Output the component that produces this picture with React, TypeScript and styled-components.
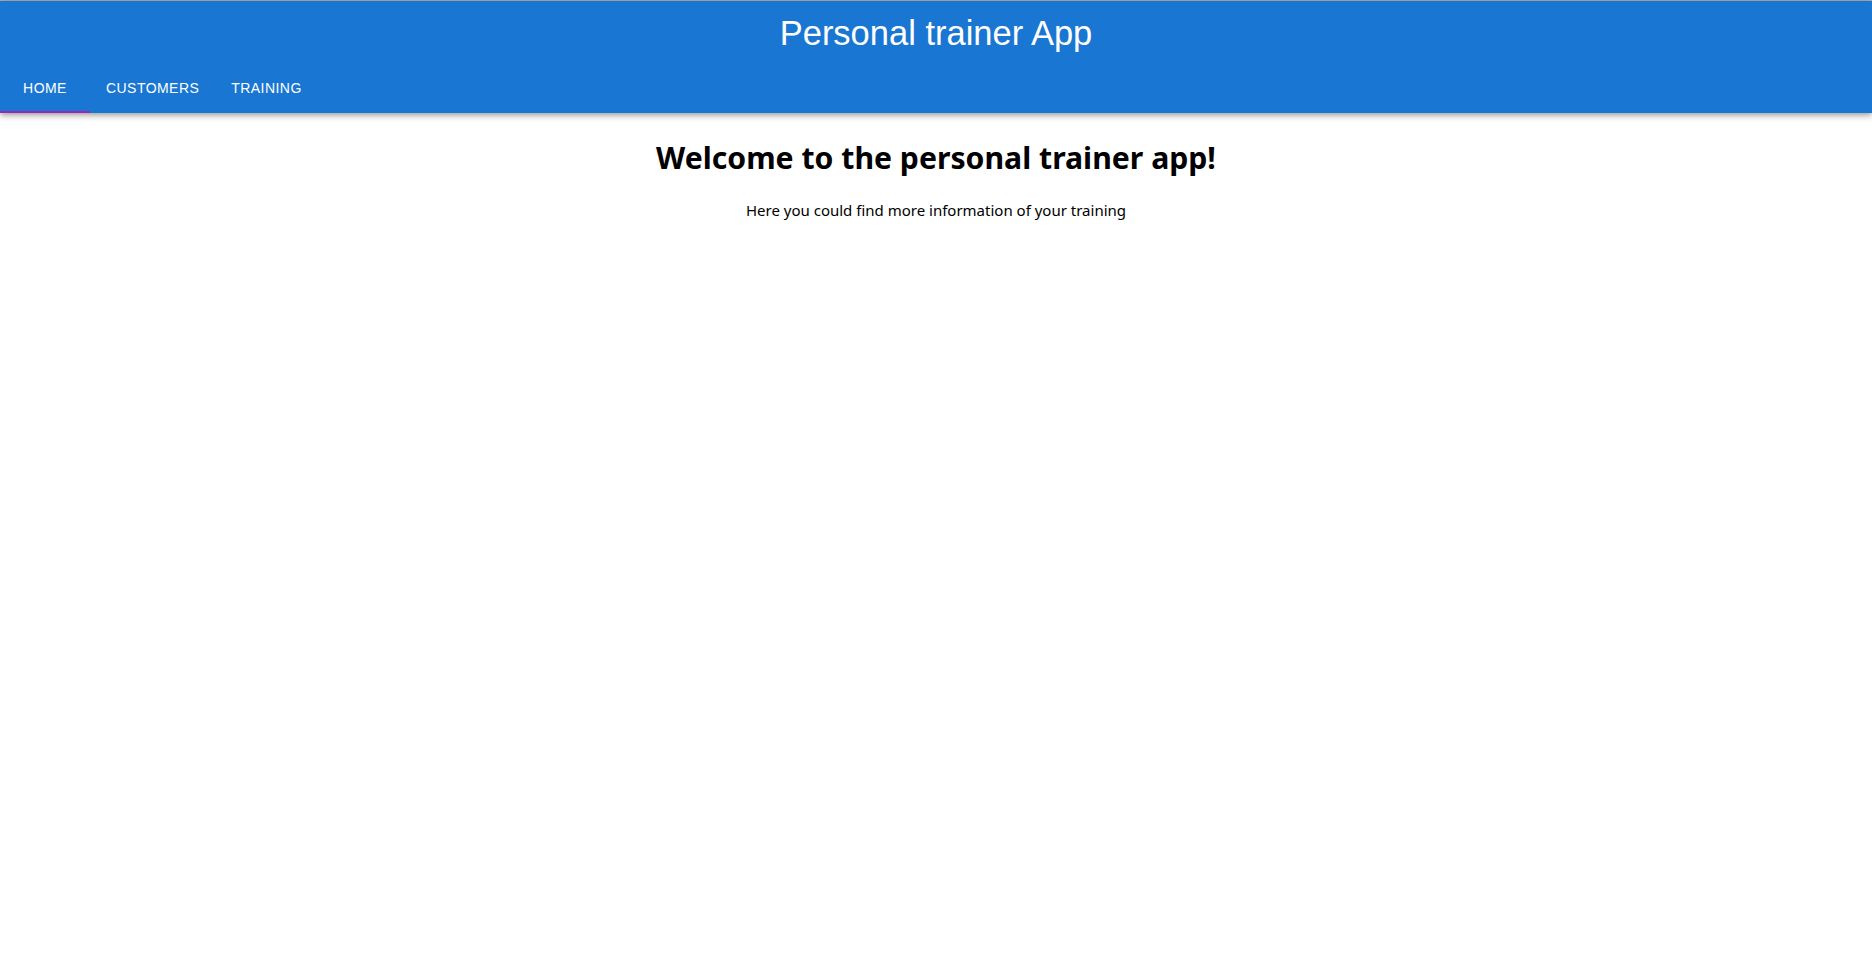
import { useState } from "react";
import styled, { createGlobalStyle } from "styled-components";

const GlobalStyle = createGlobalStyle`
  html, body {
    margin: 0;
    padding: 0;
    background: #ffffff;
  }
  body {
    font-family: "Noto Sans", "Open Sans", sans-serif;
  }
`;

const tabs = ["Home", "Customers", "Training"];

function App() {
  const [active, setActive] = useState<number>(0);

  return (
    <Page>
      <GlobalStyle />
      <AppBar>
        <Toolbar>
          <Title>Personal trainer App</Title>
        </Toolbar>
        <Tabs>
          {tabs.map((t, i) => (
            <Tab key={t} $active={active === i} onClick={() => setActive(i)}>
              {t}
            </Tab>
          ))}
        </Tabs>
      </AppBar>
      <Content>
        <h1>Welcome to the personal trainer app!</h1>
        <p>Here you could find more information of your training</p>
      </Content>
    </Page>
  );
}

const Page = styled.div`
  min-height: 100vh;
  border-top: 1px solid #a9a9a9;
  box-sizing: border-box;
`;

const AppBar = styled.header`
  background: #1976d2;
  color: #ffffff;
  display: flex;
  flex-direction: column;
  box-shadow: 0px 2px 4px -1px rgba(0, 0, 0, 0.2),
    0px 4px 5px 0px rgba(0, 0, 0, 0.14), 0px 1px 10px 0px rgba(0, 0, 0, 0.12);
  position: relative;
  z-index: 1;
`;

const Toolbar = styled.div`
  height: 64px;
  display: flex;
  align-items: center;
  justify-content: center;
`;

const Title = styled.h4`
  margin: 0;
  font-family: "Liberation Sans", Arial, sans-serif;
  font-size: 34.5px;
  font-weight: 400;
  line-height: 42px;
`;

const Tabs = styled.nav`
  display: flex;
  height: 48px;
`;

const Tab = styled.button<{ $active: boolean }>`
  min-width: 90px;
  padding: 12px 16px;
  background: transparent;
  border: none;
  border-bottom: 2px solid ${(p) => (p.$active ? "#9c27b0" : "transparent")};
  color: #ffffff;
  font-family: "Liberation Sans", Arial, sans-serif;
  font-size: 14px;
  font-weight: 400;
  text-transform: uppercase;
  letter-spacing: 0.45px;
  cursor: pointer;
  padding-top: 12px;
`;

const Content = styled.main`
  text-align: center;
  padding-top: 3px;

  h1 {
    font-size: 30.2px;
    font-weight: 700;
    margin: 21px 0;
    line-height: 42px;
    color: #000;
  }
  p {
    font-size: 15px;
    margin: 0;
    line-height: 21px;
    color: #000;
  }
`;

export default App;
